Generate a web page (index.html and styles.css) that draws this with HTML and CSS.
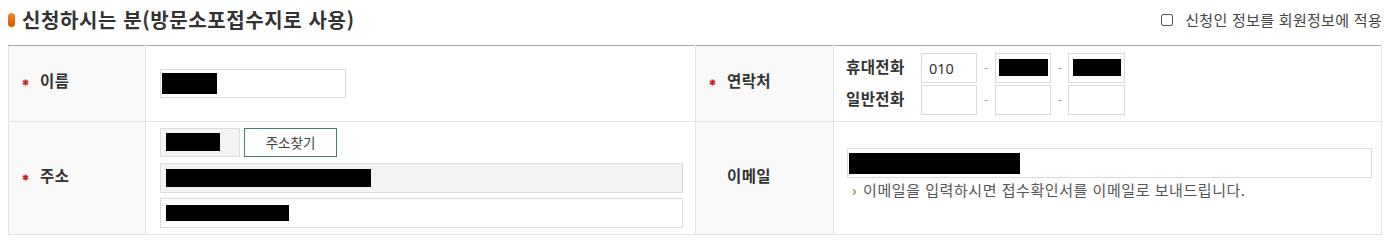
FILE: index.html
```html
<!DOCTYPE html>
<html lang="ko">
<head>
<meta charset="utf-8">
<title>신청하시는 분</title>
<link rel="stylesheet" href="styles.css">
</head>
<body>
<div class="wrap">
  <div class="head">
    <h2 class="title"><span class="bullet"></span>신청하시는 분(방문소포접수지로 사용)</h2>
    <label class="agree"><span class="cb"></span>신청인 정보를 회원정보에 적용</label>
  </div>
  <table class="form">
    <colgroup>
      <col class="c1"><col class="c2"><col class="c3"><col class="c4">
    </colgroup>
    <tr class="r1">
      <th><span class="req"><svg viewBox="0 0 8 8" width="7" height="7"><path d="M4 0.5V7.5M1 2.2L7 5.8M7 2.2L1 5.8" stroke="#c8201c" stroke-width="2"/></svg></span>이름</th>
      <td class="v-name"><div class="inp i-name"><span class="mask m-name"></span></div></td>
      <th><span class="req"><svg viewBox="0 0 8 8" width="7" height="7"><path d="M4 0.5V7.5M1 2.2L7 5.8M7 2.2L1 5.8" stroke="#c8201c" stroke-width="2"/></svg></span>연락처</th>
      <td class="v-phone">
        <div class="phone">
          <span class="plabel">휴대전화</span>
          <div class="inp i-tel"><span class="num">010</span></div>
          <span class="dash">-</span>
          <div class="inp i-tel p3"><span class="mask m-tel"></span></div>
          <span class="dash">-</span>
          <div class="inp i-tel p4"><span class="mask m-tel2"></span></div>
          <span class="plabel">일반전화</span>
          <div class="inp i-tel"></div>
          <span class="dash">-</span>
          <div class="inp i-tel"></div>
          <span class="dash">-</span>
          <div class="inp i-tel"></div>
        </div>
      </td>
    </tr>
    <tr class="r2">
      <th><span class="req"><svg viewBox="0 0 8 8" width="7" height="7"><path d="M4 0.5V7.5M1 2.2L7 5.8M7 2.2L1 5.8" stroke="#c8201c" stroke-width="2"/></svg></span>주소</th>
      <td class="v-addr">
        <div class="zip-row">
          <div class="inp i-zip ro"><span class="mask m-zip"></span></div>
          <button class="btn" type="button">주소찾기</button>
        </div>
        <div class="inp i-addr ro a1"><span class="mask m-addr1"></span></div>
        <div class="inp i-addr a2"><span class="mask m-addr2"></span></div>
      </td>
      <th><span class="req hidden"><svg viewBox="0 0 8 8" width="7" height="7"><path d="M4 0.5V7.5M1 2.2L7 5.8M7 2.2L1 5.8" stroke="#c8201c" stroke-width="2"/></svg></span>이메일</th>
      <td class="v-mail">
        <div class="inp i-mail"><span class="mask m-mail"></span></div>
        <p class="help"><span class="arrow">›</span>이메일을 입력하시면 접수확인서를 이메일로 보내드립니다.</p>
      </td>
    </tr>
  </table>
</div>
</body>
</html>
```

FILE: styles.css
```css
html, body {
  margin: 0;
  padding: 0;
  background: #fff;
}
body {
  font-family: "Noto Sans CJK KR", "Noto Sans", sans-serif;
  color: #333;
}
.wrap {
  padding: 0 6px 0 8px;
}
.head {
  height: 45px;
  box-sizing: border-box;
  padding-bottom: 5px;
  display: flex;
  align-items: center;
  justify-content: space-between;
}
.title {
  margin: 0;
  display: flex;
  align-items: center;
  font-size: 20px;
  line-height: 26px;
  font-weight: 700;
  color: #333;
  letter-spacing: 0.6px;
}
.bullet {
  width: 7px;
  height: 14px;
  border-radius: 4px;
  background: linear-gradient(#f28a2e, #d65800);
  margin-right: 7px;
}
.agree {
  display: flex;
  align-items: center;
  gap: 12px;
  font-size: 15px;
  line-height: 20px;
  color: #444;
  letter-spacing: 0.3px;
}
.cb {
  width: 10px;
  height: 10px;
  border: 1px solid #555;
  border-radius: 2px;
  background: #fff;
}
.form {
  width: 100%;
  border-collapse: collapse;
  table-layout: fixed;
  border-top: 1px solid #a8a8a8;
}
.c1 { width: 137px; }
.c2 { width: 550px; }
.c3 { width: 138px; }
.form th,
.form td {
  border: 1px solid #e4e4e4;
  padding: 0;
  vertical-align: middle;
}
.form tr:first-child th,
.form tr:first-child td {
  border-top: 1px solid #a8a8a8;
}
.form th {
  background: #f9f9f9;
  text-align: left;
  font-size: 15.5px;
  line-height: 20px;
  font-weight: 700;
  color: #333;
  padding: 0 0 7px 13px;
  letter-spacing: 0.4px;
}
.req {
  display: inline-block;
  width: 7px;
  height: 7px;
  margin-right: 11px;
  vertical-align: 1px;
}
.req svg { display: block; }
.req.hidden { visibility: hidden; }
.r1 th { height: 68px; }
.r2 th { height: 105px; }

.inp {
  box-sizing: border-box;
  height: 30px;
  border: 1px solid #dcdcdc;
  background: #fff;
  display: flex;
  align-items: center;
}
.inp.ro { background: #f3f3f3; }
.mask {
  display: block;
  background: #000;
}
.form td.v-name { padding-left: 14px; }
.i-name { width: 186px; height: 29px; padding-left: 1px; }
.m-name { width: 55px; height: 21px; }

.form td.v-phone { padding-left: 12px; }
.phone {
  display: grid;
  grid-template-columns: 75px 56px 18px 56px 17px 57px;
  grid-auto-rows: 30px;
  row-gap: 2px;
  align-items: center;
}
.plabel {
  font-size: 15.5px;
  font-weight: 700;
  line-height: 20px;
  color: #333;
  letter-spacing: 0.4px;
  position: relative;
  top: -2px;
}
.i-tel { width: 100%; padding-left: 7px; }
.i-tel.p3 { padding-left: 3px; }
.i-tel.p4 { padding-left: 4px; }
.num { font-size: 14.5px; color: #333; font-family: "Noto Sans", sans-serif; }
.m-tel { width: 49px; height: 17px; }
.m-tel2 { width: 48px; height: 17px; }
.dash {
  text-align: center;
  color: #999;
  font-size: 12px;
  line-height: 14px;
}

.form td.v-addr { padding: 3px 0 4px 14px; }
.zip-row { display: flex; gap: 4px; }
.i-zip { width: 80px; height: 29px; padding-left: 5px; }
.m-zip { width: 54px; height: 18px; }
.btn {
  box-sizing: border-box;
  width: 93px;
  height: 29px;
  border: 1px solid #3f8074;
  background: #fff;
  color: #444;
  font-family: inherit;
  font-size: 13.5px;
  padding: 0;
  margin: 0;
}
.i-addr { width: 523px; padding-left: 5px; }
.a1 { margin-top: 6px; }
.a2 { margin-top: 5px; }
.m-addr1 { width: 205px; height: 18px; }
.m-addr2 { width: 123px; height: 16px; }

.form td.v-mail { padding: 0 0 8px 13px; }
.i-mail { width: 525px; padding-left: 1px; }
.m-mail { width: 171px; height: 21px; }
.help {
  margin: 2px 0 0;
  font-size: 15px;
  line-height: 20px;
  color: #555;
  letter-spacing: 0.55px;
  display: flex;
  align-items: center;
}
.arrow {
  color: #7f9433;
  font-weight: 700;
  font-size: 14px;
  margin-left: 5px;
  margin-right: 6px;
}
```
